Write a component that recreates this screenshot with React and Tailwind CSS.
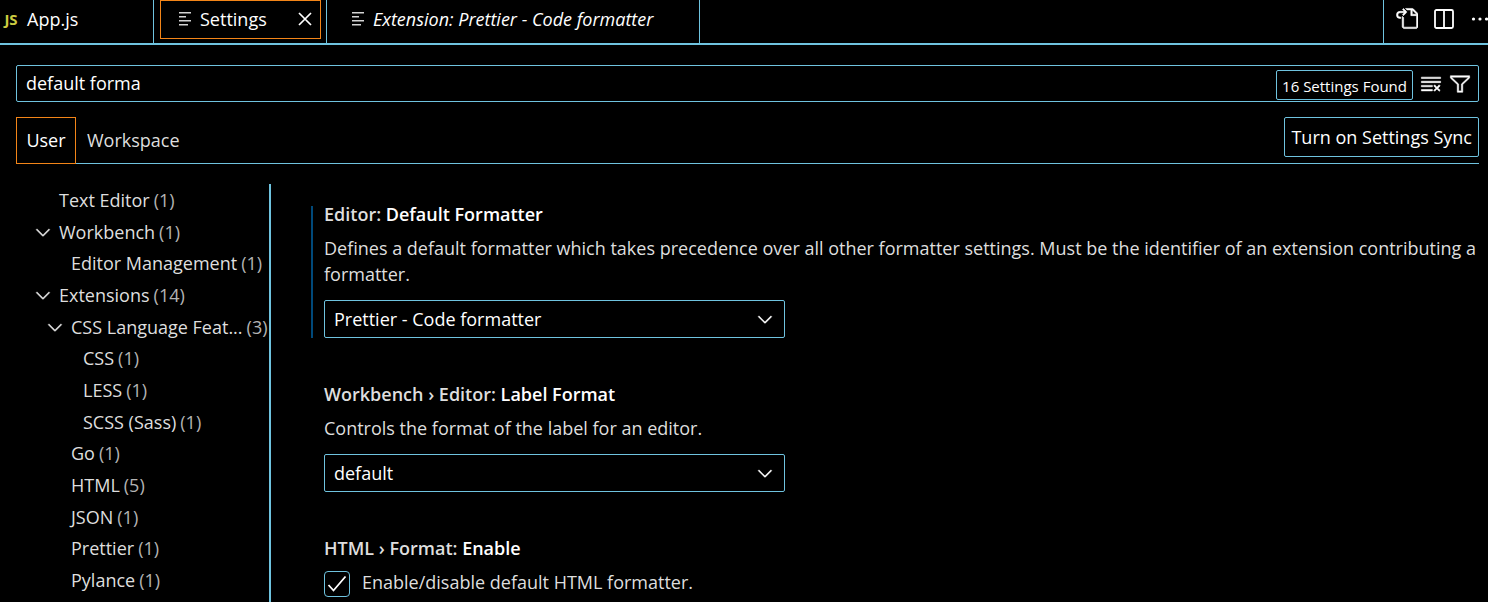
import React from "react";
import { VscClearAll, VscGoToFile, VscFilter, VscChevronDown } from "react-icons/vsc";

const tree = [
  { label: "Text Editor", count: 1, level: 0 },
  { label: "Workbench", count: 1, level: 0, open: true },
  { label: "Editor Management", count: 1, level: 1 },
  { label: "Extensions", count: 14, level: 0, open: true },
  { label: "CSS Language Feat...", count: 3, level: 1, open: true },
  { label: "CSS", count: 1, level: 2 },
  { label: "LESS", count: 1, level: 2 },
  { label: "SCSS (Sass)", count: 1, level: 2 },
  { label: "Go", count: 1, level: 1 },
  { label: "HTML", count: 5, level: 1 },
  { label: "JSON", count: 1, level: 1 },
  { label: "Prettier", count: 1, level: 1 },
  { label: "Pylance", count: 1, level: 1 },
];

const indent = ["pl-4", "pl-7", "pl-10"];

function LinesIcon() {
  return (
    <svg width="14" height="14" viewBox="0 0 14 14" className="shrink-0 text-[#d4d4d4]" aria-hidden="true">
      <g fill="currentColor">
        <rect x="1" y="0" width="12" height="1.5" />
        <rect x="1" y="4" width="7" height="1.5" />
        <rect x="1" y="8" width="12" height="1.5" />
        <rect x="1" y="12" width="9" height="1.5" />
      </g>
    </svg>
  );
}

function CloseIcon() {
  return (
    <svg width="14" height="14" viewBox="0 0 14 14" fill="none" stroke="currentColor" strokeWidth="1.7" aria-hidden="true">
      <path d="M1 1l12 12M13 1L1 13" />
    </svg>
  );
}

function SplitIcon() {
  return (
    <svg width="20" height="20" viewBox="0 0 20 20" fill="none" stroke="currentColor" strokeWidth="1.8" aria-hidden="true">
      <rect x="1" y="1" width="18" height="18" rx="1.5" />
      <path d="M10 1v18" />
    </svg>
  );
}

function Tree() {
  return (
    <nav aria-label="Settings categories" className="w-[255px] shrink-0 overflow-hidden border-r-2 border-[#6fc3df]">
      <ul className="grid h-[412px] auto-rows-fr grid-cols-1">
        {tree.map((n) => (
          <li key={n.label} className={"flex items-center " + indent[n.level]}>
            <a href="#settings" className="flex items-center whitespace-nowrap">
              <span className="flex w-[27px] shrink-0 items-center">
                {n.open && <VscChevronDown size={22} className="stroke-current stroke-[0.3]" />}
              </span>
              <span>{n.label}</span>
              <span className="ml-1 text-[#b3b3b3]">({n.count})</span>
            </a>
          </li>
        ))}
      </ul>
    </nav>
  );
}

function Title({ category, name }) {
  return (
    <h2 className="mb-2 font-semibold">
      {category} <span className="text-white">{name}</span>
    </h2>
  );
}

function SelectBox({ id, label, value }) {
  return (
    <div className="relative mt-[13px] max-w-[461px]">
      <select
        id={id}
        aria-label={label}
        defaultValue={value}
        className="block h-[38px] w-full appearance-none rounded-xs border border-[#6fc3df] bg-black px-[9px] text-white"
      >
        <option>{value}</option>
      </select>
      <VscChevronDown
        size={22}
        className="pointer-events-none absolute top-2 right-[9px] stroke-current stroke-[0.3] text-white"
      />
    </div>
  );
}

export default function App() {
  return (
    <div className="flex h-screen flex-col overflow-hidden bg-black font-['Open_Sans','Noto_Sans',sans-serif] text-lg leading-[26px] text-[#dedede]">
      <header className="flex h-[45px] shrink-0 border-b-2 border-[#6fc3df] text-white">
        <button className="flex w-[154px] items-center gap-2 border-r border-[#6fc3df] pb-[6px] pl-[3px]">
          <span className="w-4 text-[15px] font-bold text-[#cbcb41]">JS</span>
          App.js
        </button>
        <div className="flex w-[173px] border-r border-[#6fc3df] pb-1 pl-[6px]">
          <div className="flex w-[161px] items-center border border-[#f38518] pb-[2px] pl-[17px]">
            <button className="flex grow items-center gap-2">
              <LinesIcon />
              Settings
            </button>
            <button aria-label="Close" className="mr-2">
              <CloseIcon />
            </button>
          </div>
        </div>
        <button className="flex w-[373px] items-center gap-2 border-r border-[#6fc3df] pb-[6px] pl-6 italic">
          <LinesIcon />
          Extension: Prettier - Code formatter
        </button>
        <div className="ml-auto flex w-[105px] shrink-0 items-center gap-4 overflow-hidden border-l border-[#6fc3df] pb-[6px] pl-[11px]">
          <button aria-label="Open Settings (JSON)" className="shrink-0">
            <VscGoToFile size={23} className="stroke-current stroke-[0.4]" />
          </button>
          <button aria-label="Split Editor" className="shrink-0">
            <SplitIcon />
          </button>
          <button aria-label="More Actions" className="shrink-0">
            <svg width="22" height="22" viewBox="0 0 22 22" fill="currentColor" aria-hidden="true">
              <circle cx="3.5" cy="11" r="1.6" />
              <circle cx="10" cy="11" r="1.6" />
              <circle cx="16.5" cy="11" r="1.6" />
            </svg>
          </button>
        </div>
      </header>

      <main className="flex min-h-0 grow flex-col pt-5 pr-[9px] pl-4">
        <div className="flex h-[37px] shrink-0 items-center rounded-xs border border-[#6fc3df] pr-[7px] pl-[9px]">
          <input
            aria-label="Search settings"
            defaultValue="default forma"
            className="min-w-0 grow bg-transparent pb-[2px] text-white outline-none"
          />
          <span className="mt-[3px] flex h-[30px] items-center rounded-xs border border-[#6fc3df] px-[5px] pt-[2px] text-[15px] text-white">
            16 Settings Found
          </span>
          <button aria-label="Clear Settings Search Input" className="ml-[7px] text-white">
            <VscClearAll size={22} className="stroke-current stroke-[0.4]" />
          </button>
          <button aria-label="Filter Settings" className="ml-[7px] text-white">
            <VscFilter size={22} className="stroke-current stroke-[0.4]" />
          </button>
        </div>

        <div className="mt-[15px] flex h-[47px] shrink-0 items-start border-b border-[#6fc3df]">
          <button className="-mb-px h-[47px] w-[60px] border border-[#f38518] pb-[2px] text-white">User</button>
          <button className="h-[46px] px-[11px]">Workspace</button>
          <button className="ml-auto h-10 rounded-xs border border-[#6fc3df] px-[6px] text-white">
            Turn on Settings Sync
          </button>
        </div>

        <div className="mt-5 flex min-h-0 grow">
          <Tree />
          <section className="flex min-w-0 grow flex-col gap-[43px] overflow-hidden pt-[17px] pl-10">
            <div className="flex gap-[11px]">
              <span className="mt-[5px] w-[2px] shrink-0 bg-[#00497a]" />
              <div className="min-w-0 grow">
                <Title category="Editor:" name="Default Formatter" />
                <p>
                  Defines a default formatter which takes precedence over all other formatter settings. Must be the
                  identifier of an extension contributing a formatter.
                </p>
                <SelectBox id="formatter" label="Default Formatter" value="Prettier - Code formatter" />
              </div>
            </div>
            <div className="pl-[13px]">
              <Title category="Workbench › Editor:" name="Label Format" />
              <p>Controls the format of the label for an editor.</p>
              <SelectBox id="label-format" label="Label Format" value="default" />
            </div>
            <div className="pl-[13px]">
              <Title category="HTML › Format:" name="Enable" />
              <label className="flex items-start gap-3">
                <span className="relative mt-[2px] h-[26px] w-[26px] shrink-0">
                  <input
                    type="checkbox"
                    defaultChecked
                    className="peer block h-full w-full appearance-none rounded border border-[#6fc3df] bg-black"
                  />
                  <svg
                    width="26"
                    height="26"
                    viewBox="0 0 26 26"
                    fill="none"
                    stroke="white"
                    strokeWidth="1.8"
                    className="pointer-events-none absolute inset-0 hidden peer-checked:block"
                    aria-hidden="true"
                  >
                    <path d="M4.5 14L9.5 19.5L21.5 5.5" />
                  </svg>
                </span>
                Enable/disable default HTML formatter.
              </label>
            </div>
          </section>
        </div>
      </main>
    </div>
  );
}
